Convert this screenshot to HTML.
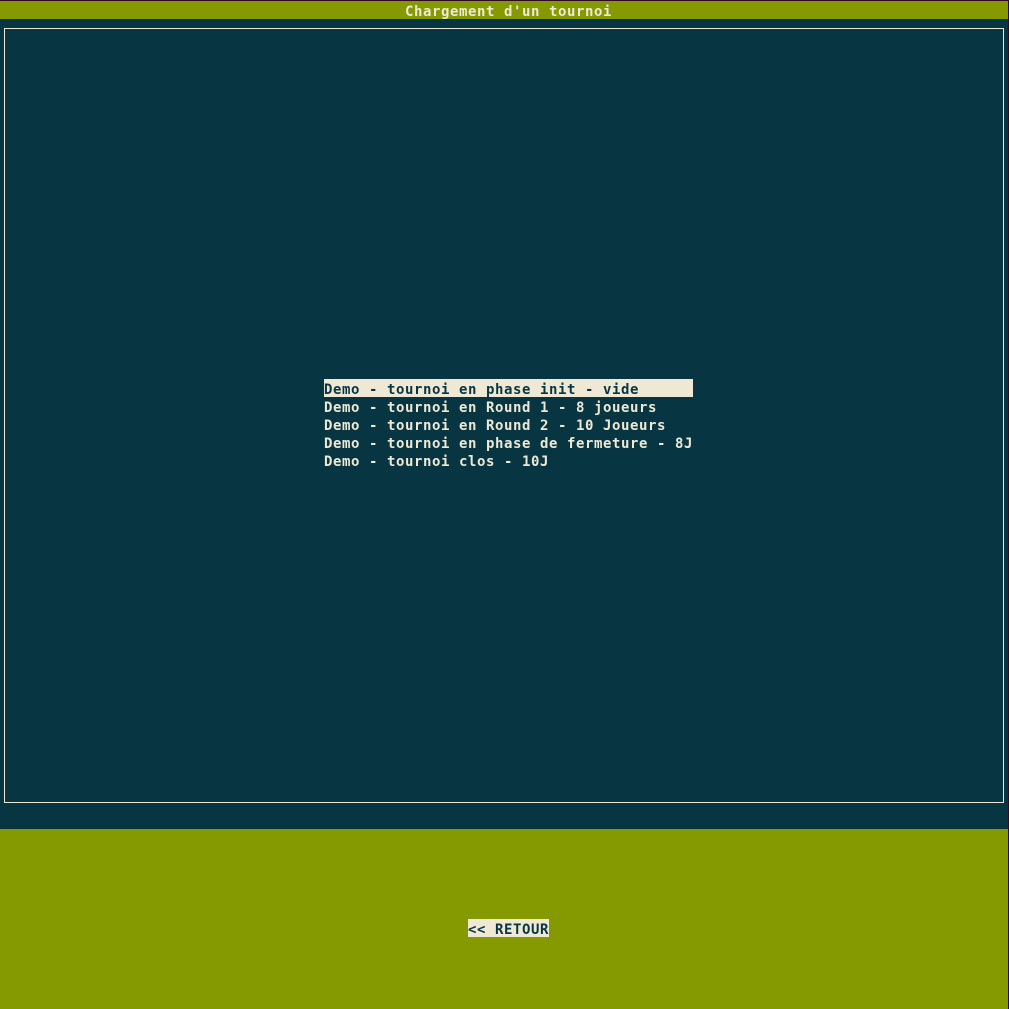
<!DOCTYPE html>
<html><head><meta charset="utf-8"><style>
html,body{margin:0;padding:0;width:1009px;height:1009px;overflow:hidden;background:#300a24;}
body{position:relative;font-family:"DejaVu Sans Mono","Liberation Mono",monospace;font-weight:bold;font-size:14px;letter-spacing:0.57px;color:#eee8d5;}
.a{position:absolute;}
.row{position:absolute;height:18px;line-height:18px;white-space:pre;}
.row span{position:relative;top:2px;}
</style></head><body>
<div class="a" style="left:0;top:1px;width:1008px;height:18px;background:#859900;"></div>
<div class="row" style="left:405px;top:1px;"><span>Chargement d'un tournoi</span></div>
<div class="a" style="left:0;top:19px;width:1008px;height:810px;background:#073642;"></div>
<div class="a" style="left:4px;top:28px;width:998px;height:773px;border:1px solid #eee8d5;"></div>
<div class="a" style="left:324px;top:379px;width:369px;height:18px;background:#eee8d5;"></div>
<div class="row" style="left:324px;top:379px;color:#073642;"><span>Demo - tournoi en phase init - vide</span></div>
<div class="row" style="left:324px;top:397px;"><span>Demo - tournoi en Round 1 - 8 joueurs</span></div>
<div class="row" style="left:324px;top:415px;"><span>Demo - tournoi en Round 2 - 10 Joueurs</span></div>
<div class="row" style="left:324px;top:433px;"><span>Demo - tournoi en phase de fermeture - 8J</span></div>
<div class="row" style="left:324px;top:451px;"><span>Demo - tournoi clos - 10J</span></div>
<div class="a" style="left:0;top:829px;width:1008px;height:180px;background:#859900;"></div>
<div class="row" style="left:468px;top:919px;width:81px;background:#eee8d5;color:#073642;"><span>&lt;&lt; RETOUR</span></div>
</body></html>
